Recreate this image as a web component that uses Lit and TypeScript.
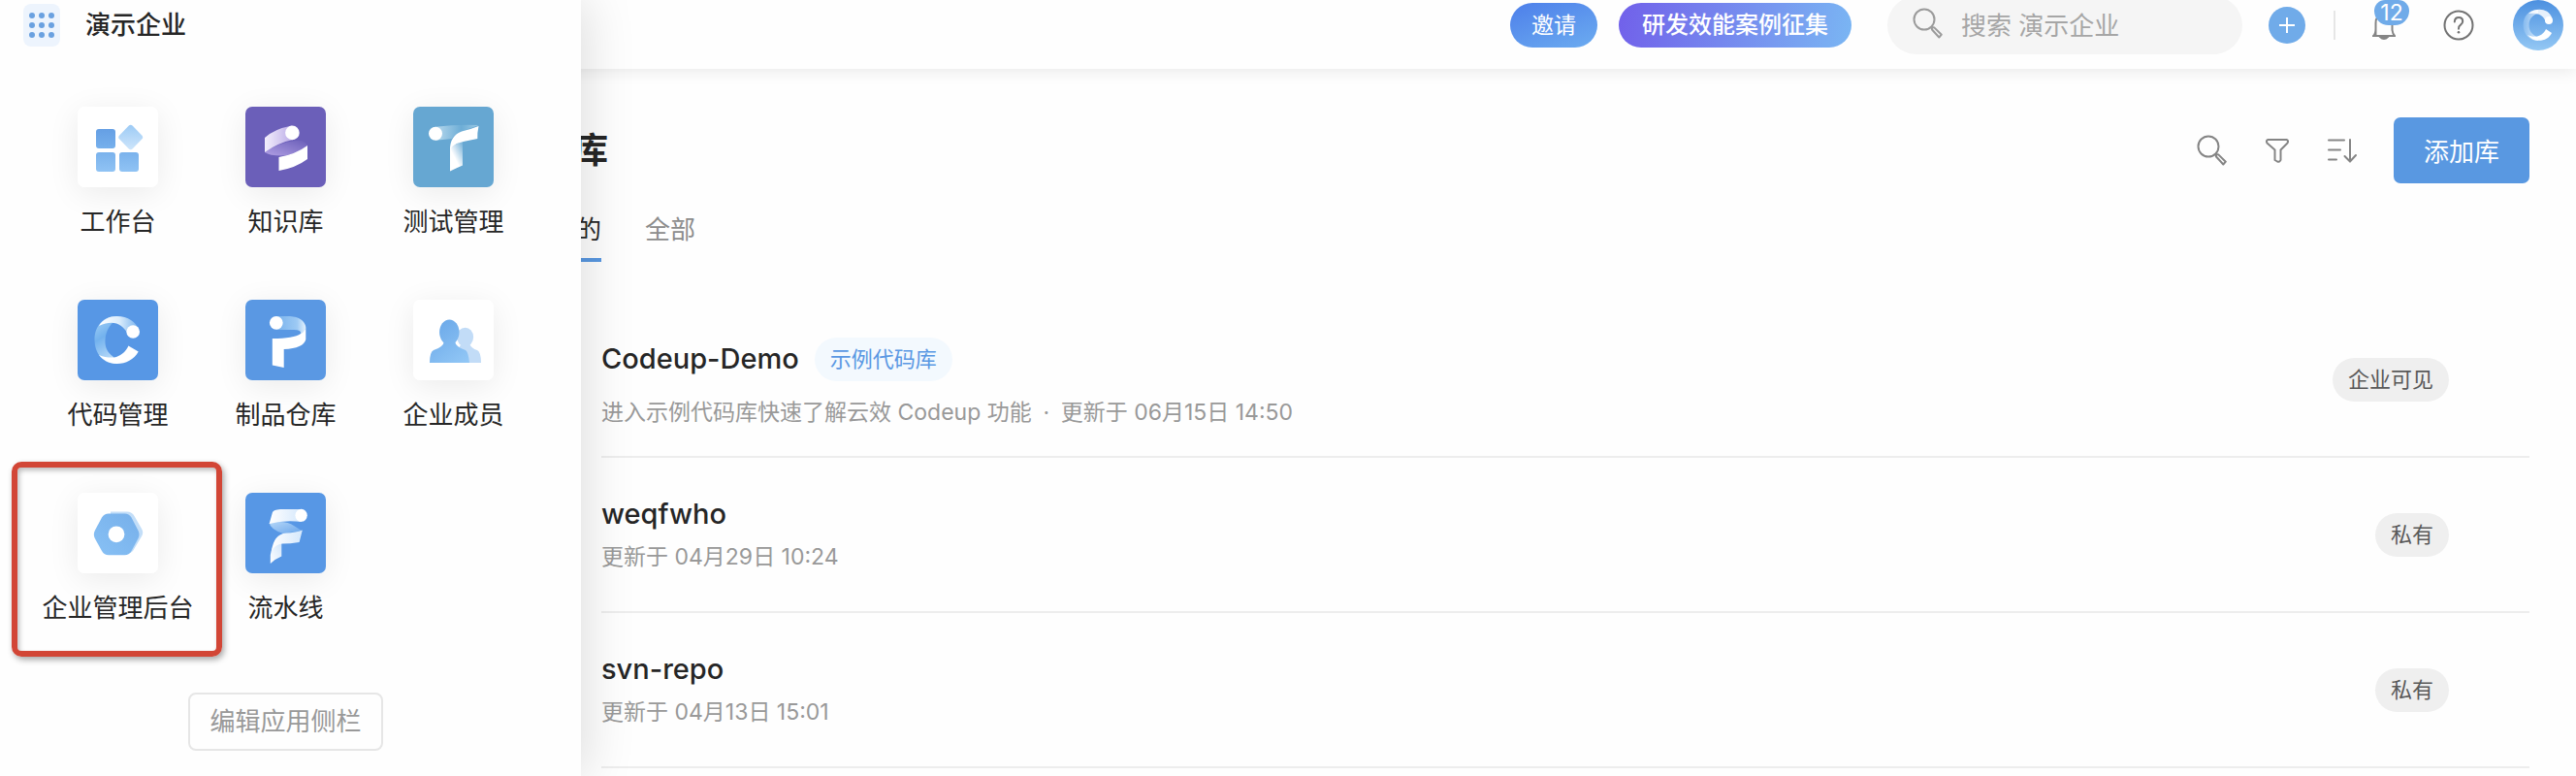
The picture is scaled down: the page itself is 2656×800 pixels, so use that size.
import { LitElement, html, css, svg } from "lit";
import { customElement, property } from "lit/decorators.js";

const reset = css`
  *,
  *::before,
  *::after {
    box-sizing: border-box;
  }
  button,
  input {
    font: inherit;
    color: inherit;
    border: 0;
    margin: 0;
    padding: 0;
    background: none;
  }
  a {
    color: inherit;
    text-decoration: none;
  }
  svg {
    display: block;
  }
`;

interface AppEntry {
  name: string;
  kind: string;
  color: string;
  art: unknown;
  active?: boolean;
}

const APPS: AppEntry[] = [
  {
    name: "工作台",
    kind: "workbench",
    color: "#fff",
    art: svg`
      <defs>
        <linearGradient id="wa" x1="0" y1="0" x2="0" y2="1"><stop offset="0" stop-color="#659fe4"/><stop offset="1" stop-color="#76b0ec"/></linearGradient>
        <linearGradient id="wb" x1="0" y1="0" x2="0" y2="1"><stop offset="0" stop-color="#7ab2ec"/><stop offset="1" stop-color="#90c3f4"/></linearGradient>
        <linearGradient id="wc" x1="0" y1="0" x2="0" y2="1"><stop offset="0" stop-color="#9dcbf5"/><stop offset="1" stop-color="#cde5fb"/></linearGradient>
      </defs>
      <rect x="19" y="23" width="20" height="20" rx="3" fill="url(#wa)"/>
      <rect x="19" y="47" width="20" height="20" rx="3" fill="url(#wb)"/>
      <rect x="43" y="47" width="20" height="20" rx="3" fill="url(#wb)"/>
      <path d="M52.6 19.8Q54.7 17.8 56.8 19.8L66.2 29.4Q68.2 31.5 66.2 33.6L56.8 43.2Q54.7 45.2 52.6 43.2L43.2 33.6Q41.2 31.5 43.2 29.4Z" fill="url(#wc)"/>`,
  },
  {
    name: "知识库",
    kind: "knowledge",
    color: "#6b5fb9",
    art: svg`
      <defs>
        <linearGradient id="ka"><stop offset="0" stop-color="#f3effc"/><stop offset="1" stop-color="#b7a6e6"/></linearGradient>
        <linearGradient id="kb" x1="0" y1="1" x2="1" y2="0"><stop offset="0" stop-color="#b09fe4"/><stop offset="1" stop-color="#6b5fb9"/></linearGradient>
      </defs>
      <path d="M20 47Q34 37 52 35Q61 34 64 40Q52 50 37 50.5Q25 50.5 20 47Z" fill="url(#kb)"/>
      <path d="M20 32Q30 23 48 19.6L51 33.5Q34 37 20 47Z" fill="url(#ka)"/>
      <circle cx="48.4" cy="26.9" r="7.3" fill="#fff"/>
      <path d="M34.5 52Q52 49 64 40V54Q52 63 34.5 66Z" fill="#fff"/>`,
  },
  {
    name: "测试管理",
    kind: "testing",
    color: "#66a7d2",
    art: svg`
      <defs>
        <linearGradient id="ta"><stop offset="0" stop-color="#b7d9ed"/><stop offset=".6" stop-color="#6dadd6"/><stop offset="1" stop-color="#9ccae4"/></linearGradient>
        <linearGradient id="tb" x1="1" y1="0" x2="0.2" y2="1"><stop offset="0" stop-color="#6dacd6"/><stop offset=".65" stop-color="#fff"/></linearGradient>
      </defs>
      <path d="M23 20.8Q46 18 67.5 19Q60 22 50 25.5Q43 28 40 33L23 34.8Z" fill="url(#ta)"/>
      <path d="M38 42L51 35V60.5Q45 63 38 66.5Z" fill="url(#tb)"/>
      <path d="M67.5 20Q66 27 66.3 33Q50 36 45 38Q41 40 38 44Q38 30 50 25.5Q60 23 67.5 20Z" fill="#fff"/>
      <circle cx="23" cy="27.8" r="7" fill="#fff"/>`,
  },
  {
    name: "代码管理",
    kind: "code",
    color: "#5797e5",
    art: svg`
      <defs>
        <linearGradient id="ca" x1="0" y1="0" x2="0.3" y2="1"><stop offset="0" stop-color="#a9d4f7"/><stop offset=".5" stop-color="#73b2ee"/><stop offset="1" stop-color="#b4d8f8"/></linearGradient>
        <linearGradient id="cb"><stop offset="0" stop-color="#fff"/><stop offset=".5" stop-color="#dcedfc"/><stop offset="1" stop-color="#75b1ed"/></linearGradient>
      </defs>
      <path d="M40 17C27 17 17.5 27 17.5 41C17.5 56 27 66 40 66L37 59C30 54 28 48 28.5 41C29 33 33 26 38 22Z" fill="url(#ca)"/>
      <path d="M22 27C26 20 33 17 40.5 17C52 17 60 23 63.5 31L51 34C46 25 37 20 22 27Z" fill="url(#cb)"/>
      <path d="M62.7 53.6C58 62 50 66 40.5 66C33 66 26 62 22 57C29 60 36 60 40 59C46 57 50 53 52.4 47.6Z" fill="#fff"/>
      <circle cx="57.2" cy="33" r="6.8" fill="#fff"/>`,
  },
  {
    name: "制品仓库",
    kind: "packages",
    color: "#5a98e3",
    art: svg`
      <defs>
        <linearGradient id="pa"><stop offset="0" stop-color="#79b2ec"/><stop offset=".7" stop-color="#9dcaf4"/><stop offset="1" stop-color="#e4f1fd"/></linearGradient>
      </defs>
      <path d="M32 17H46Q60 18 62.3 28Q62 33 57 35Q58 31 50 31L32 31Z" fill="url(#pa)"/>
      <path d="M62.3 28V41Q60 50 39.7 51V70L27.8 67.6V40Q50 40 57 35Q62 32 62.3 28Z" fill="#fff"/>
      <circle cx="31.8" cy="23.8" r="6.9" fill="#fff"/>`,
  },
  {
    name: "企业成员",
    kind: "members",
    color: "#fff",
    art: svg`
      <defs>
        <linearGradient id="ma" gradientUnits="userSpaceOnUse" x1="22" y1="20" x2="56" y2="66"><stop offset="0" stop-color="#69a7e8"/><stop offset="1" stop-color="#93c8f6"/></linearGradient>
      </defs>
      <g fill="#c2dcf7">
        <ellipse cx="53.6" cy="38.5" rx="8.5" ry="9.8"/>
        <path d="M40 65V54Q48 51 49 46H58.5Q60 50 66 52Q70 54 70 65Z"/>
      </g>
      <g fill="url(#ma)">
        <ellipse cx="37.3" cy="33.5" rx="10.2" ry="13"/>
        <path d="M17 65Q17 54 21 52Q31 49 32 43H43Q44 49 54 52Q57 54 58 65Z"/>
      </g>`,
  },
  {
    name: "企业管理后台",
    kind: "admin",
    color: "#fff",
    active: true,
    art: svg`
      <defs>
        <linearGradient id="ha" x1="1" y1="0" x2="0" y2="1"><stop offset="0" stop-color="#76afea"/><stop offset="1" stop-color="#88c1f5"/></linearGradient>
      </defs>
      <path d="M34 19.5H51Q56 19.5 58.5 24L66 37Q68.5 41 66 45L57 60Q55 62.5 51 62.5H34Z" fill="#c3def8"/>
      <path d="M32 21.4H48.5Q53 21.4 55.5 25.5L62.5 39Q64.5 43 62.5 47L55.5 60Q53 64.3 48.5 64.3H32Q27.5 64.3 25 60L17.8 47Q15.8 43 17.8 39L25 25.5Q27.5 21.4 32 21.4Z" fill="url(#ha)"/>
      <circle cx="40" cy="42.8" r="8.4" fill="#fff"/>`,
  },
  {
    name: "流水线",
    kind: "flow",
    color: "#5797e5",
    art: svg`
      <defs>
        <linearGradient id="fb" x1="0" y1="0" x2="1" y2="1"><stop offset="0" stop-color="#b4d6f8"/><stop offset="1" stop-color="#6aa6ea"/></linearGradient>
        <linearGradient id="fc" x1="0" y1="1" x2="1" y2="0"><stop offset="0" stop-color="#fff"/><stop offset="1" stop-color="#d0e5fb"/></linearGradient>
        <linearGradient id="fd"><stop offset="0" stop-color="#fff"/><stop offset="1" stop-color="#d5e8fc"/></linearGradient>
      </defs>
      <path d="M24.6 31Q42 28 50 34L58.8 39.5Q48 40 39 42Q26 38 24.6 31Z" fill="url(#fb)"/>
      <path d="M28 20Q29 17.5 36 17H58V30Q40 28 24.6 32Z" fill="url(#fd)"/>
      <path d="M25.8 64Q27 56 31 52L37.3 51V65.5Q31 68 25.8 73Z" fill="url(#fc)"/>
      <path d="M27 60Q29 43 42 41.5Q52 41 58.8 38.5L55.6 51Q46 52.5 38 52.5Q31 53 27 60Z" fill="url(#fd)"/>
      <ellipse cx="57.6" cy="23.3" rx="6.2" ry="6.5" fill="#fff"/>`,
  },
];

interface Repo {
  name: string;
  tag?: string;
  note?: string;
  updated: string;
  visibility: string;
}

const REPOS: Repo[] = [
  {
    name: "Codeup-Demo",
    tag: "示例代码库",
    note: "进入示例代码库快速了解云效 Codeup 功能",
    updated: "更新于 06月15日 14:50",
    visibility: "企业可见",
  },
  { name: "weqfwho", updated: "更新于 04月29日 10:24", visibility: "私有" },
  { name: "svn-repo", updated: "更新于 04月13日 15:01", visibility: "私有" },
];

const magnifier = html`
  <svg width="32" height="32" viewBox="0 0 32 32" fill="none" stroke="currentColor" stroke-width="2" aria-hidden="true">
    <circle cx="12" cy="12" r="10.5" />
    <path d="M19.5 19.5l1.5 1.5M20 22.5q-.5-1 .3-1.8t2-.3l7.5 7.3-2.5 2.8z" stroke-linejoin="round" />
  </svg>
`;

@customElement("app-drawer")
class AppDrawer extends LitElement {
  static styles = [
    reset,
    css`
      :host {
        display: flex;
        flex-direction: column;
        background: #fefefe;
        box-shadow: 6px 0 48px rgba(0, 0, 0, 0.13);
        color: #262626;
        font-size: 26px;
        line-height: 36px;
      }
      .head {
        display: flex;
        align-items: center;
        gap: 26px;
        height: 52px;
        padding-left: 24px;
      }
      .launcher {
        display: grid;
        place-items: center;
        width: 38px;
        height: 44px;
        border-radius: 8px;
        background: #edf4fd;
        color: #6aa1e0;
        cursor: pointer;
      }
      .org {
        font-weight: 500;
      }
      .apps {
        display: grid;
        grid-template-columns: repeat(3, 173px);
        row-gap: 62px;
        margin: 0;
        padding: 58px 0 0 35px;
        list-style: none;
      }
      .cell {
        position: relative;
      }
      .app {
        display: flex;
        flex-direction: column;
        align-items: center;
        gap: 18px;
        white-space: nowrap;
      }
      .tile {
        width: 83px;
        height: 83px;
        border-radius: 7px;
        box-shadow: 0 6px 32px rgba(0, 0, 0, 0.08);
        overflow: hidden;
      }
      .active::after {
        content: "";
        position: absolute;
        inset: -32px -21px -32px -23px;
        border: 6px solid #d24636;
        border-radius: 10px;
        box-shadow: 2px 3px 6px rgba(0, 0, 0, 0.35), inset 2px 3px 5px rgba(0, 0, 0, 0.25);
        pointer-events: none;
      }
      .edit {
        align-self: center;
        height: 60px;
        margin: 69px 10px 26px 0;
        padding: 0 20px;
        border: 2px solid #e6e6e6;
        border-radius: 8px;
        color: #999;
        cursor: pointer;
      }
    `,
  ];

  render() {
    return html`
      <div class="head">
        <button class="launcher" aria-label="演示企业">
          <svg width="28" height="28" viewBox="0 0 28 28" fill="currentColor">
            ${[4, 14, 24].map((y) => [4, 14, 24].map((x) => svg`<circle cx=${x} cy=${y} r="3" />`))}
          </svg>
        </button>
        <span class="org">演示企业</span>
      </div>
      <ul class="apps">
        ${APPS.map(
          (app) => html`
            <li class="cell ${app.active ? "active" : ""}">
              <a class="app" href="#${app.kind}">
                <svg class="tile" viewBox="0 0 83 83" aria-hidden="true">
                  <rect width="83" height="83" fill=${app.color} />
                  ${app.art}
                </svg>
                <span>${app.name}</span>
              </a>
            </li>
          `
        )}
      </ul>
      <button class="edit">编辑应用侧栏</button>
    `;
  }
}

@customElement("top-bar")
class TopBar extends LitElement {
  static styles = [
    reset,
    css`
      :host {
        display: flex;
        justify-content: flex-end;
        align-items: center;
        height: 71px;
        padding: 0 13px 19px 0;
        background: #fefefe;
        box-shadow: 0 2px 16px rgba(0, 0, 0, 0.09);
      }
      .pill {
        height: 46px;
        margin-right: 22px;
        padding: 0 22px;
        border-radius: 23px;
        background: linear-gradient(160deg, #4d7fea, #6cacf0);
        color: #fff;
        font-size: 23px;
        line-height: 46px;
      }
      .promo {
        padding: 0 24px;
        background: linear-gradient(100deg, #7160ea, #7ab6f3);
        font-size: 24px;
        font-weight: 500;
      }
      .search {
        display: flex;
        align-items: center;
        gap: 18px;
        width: 366px;
        height: 60px;
        margin: 0 27px 0 15px;
        padding: 0 26px;
        border-radius: 30px;
        background: #f5f5f5;
        color: #9b9b9b;
      }
      .search svg {
        flex: none;
        margin-top: -4px;
      }
      .query {
        flex: 1;
        min-width: 0;
        height: 40px;
        font-size: 26px;
        outline: none;
      }
      .query::placeholder {
        color: #a6a6a6;
        opacity: 1;
      }
      .add {
        display: grid;
        place-items: center;
        width: 38px;
        height: 38px;
        border-radius: 50%;
        background: #70abe9;
        color: #fff;
      }
      .rule {
        width: 2px;
        height: 30px;
        margin: 0 38px 0 29px;
        background: #e6e6e6;
      }
      .bell {
        position: relative;
        color: #858585;
      }
      .count {
        position: absolute;
        left: 2px;
        bottom: 15px;
        width: 36px;
        height: 26px;
        border-radius: 12px 12px 16px 16px;
        background: #70abe9;
        color: #fff;
        font-size: 23px;
        line-height: 26px;
        text-align: center;
      }
      .help {
        margin: 0 40px 0 49px;
        color: #737373;
      }
    `,
  ];

  render() {
    return html`
      <button class="pill">邀请</button>
      <button class="pill promo">研发效能案例征集</button>
      <label class="search">
        ${magnifier}
        <input class="query" type="search" placeholder="搜索 演示企业" aria-label="搜索 演示企业" />
      </label>
      <button class="add" aria-label="添加库">
        <svg width="16" height="16" viewBox="0 0 16 16" stroke="currentColor" stroke-width="2"><path d="M8 0v16M0 8h16" /></svg>
      </button>
      <span class="rule"></span>
      <button class="bell" aria-label="12">
        <svg width="24" height="30" viewBox="0 0 24 30" fill="none" stroke="currentColor" stroke-width="2">
          <path d="M3.5 26V13Q3.5 4 12 4T20.5 13V20Q21 24 23 26H1Q3.5 24 3.5 19" />
          <path d="M8 27q4 4 8 0z" fill="currentColor" />
        </svg>
        <span class="count">12</span>
      </button>
      <button class="help" aria-label="?">
        <svg width="32" height="32" viewBox="0 0 32 32" fill="none" stroke="currentColor" stroke-width="2">
          <circle cx="16" cy="16" r="14.5" />
          <path d="M11.8 12.5q.2-4.5 4.3-4.5t4.1 4q0 2.2-2.2 3.7t-2 4" stroke-linecap="round" />
          <circle cx="16" cy="23.3" r="1.3" fill="currentColor" stroke="none" />
        </svg>
      </button>
      <a href="#me" aria-label="C">
        <svg width="52" height="52" viewBox="0 0 52 52">
          <defs>
            <linearGradient id="ba" x1="0" y1="0" x2="0" y2="1"><stop offset="0" stop-color="#4c90e0" /><stop offset="1" stop-color="#94c8f4" /></linearGradient>
            <linearGradient id="bb"><stop offset="0" stop-color="#8fc1f2" /><stop offset="1" stop-color="#fff" /></linearGradient>
          </defs>
          <circle cx="26" cy="26" r="26" fill="url(#ba)" />
          <path d="M26 10C16 10 10.5 17 10.5 26C10.5 35 17 42 26 42L26 38.5C19 36 16.5 31 16.5 26C16.5 20 20 15 26 14Z" fill="url(#bb)" opacity=".7" />
          <path d="M16 14C24 7 37 9 40 18L34 23C31 14 24 13 16 14Z" fill="#fff" opacity=".85" />
          <circle cx="37" cy="21" r="4" fill="#fff" />
          <path d="M40 34C36 43 22 45 15 36C23 40 31 37 34 30Z" fill="#fff" />
        </svg>
      </a>
    `;
  }
}

@customElement("repo-row")
class RepoRow extends LitElement {
  @property({ attribute: false }) repo!: Repo;

  static styles = [
    reset,
    css`
      :host {
        display: flex;
        align-items: center;
        justify-content: space-between;
        height: 160px;
        padding: 0 83px 0 0;
        border-bottom: 2px solid #ededed;
        color: #999;
        font-size: 22px;
      }
      .title {
        display: flex;
        align-items: center;
        gap: 16px;
        margin-bottom: 10px;
        line-height: 36px;
      }
      .tagged {
        margin: 6px 0 16px;
      }
      .name {
        color: #262626;
        font-size: 29px;
        font-weight: 500;
      }
      .tag,
      .visibility {
        height: 45px;
        padding: 0 16px;
        border-radius: 23px;
        line-height: 44px;
      }
      .tag {
        background: #f3f9fe;
        color: #5a98e3;
      }
      .visibility {
        background: #efefef;
        color: #595959;
      }
      .meta {
        display: flex;
        font-size: 23px;
        line-height: 32px;
      }
      .dot {
        width: 30px;
        text-align: center;
      }
    `,
  ];

  render() {
    const { name, tag, note, updated, visibility } = this.repo;
    return html`
      <div>
        <div class="title ${tag ? "tagged" : ""}">
          <a class="name" href="#${name}">${name}</a>
          ${tag ? html`<span class="tag">${tag}</span>` : null}
        </div>
        <div class="meta">
          ${note ? html`<span>${note}</span><span class="dot">·</span>` : null}
          <span>${updated}</span>
        </div>
      </div>
      <span class="visibility">${visibility}</span>
    `;
  }
}

@customElement("app-root")
class AppRoot extends LitElement {
  static styles = [
    reset,
    css`
      :host {
        display: block;
        position: relative;
        min-height: 100vh;
        overflow: hidden;
        background: #fefefe;
        color: #262626;
        font-family: Inter, "Noto Sans CJK SC", sans-serif;
      }
      .drawer {
        position: absolute;
        inset: 0 auto 0 0;
        width: 599px;
      }
      .page {
        padding: 50px 48px 0 591px;
      }
      .toolbar {
        display: flex;
        align-items: center;
        height: 68px;
      }
      .heading {
        flex: 1;
        margin: 0;
        font-size: 36px;
        font-weight: 700;
        line-height: 48px;
      }
      .tools {
        display: flex;
        align-items: center;
        gap: 38px;
        margin-right: 37px;
        color: #858585;
      }
      .create {
        height: 68px;
        padding: 0 31px 2px;
        border-radius: 7px;
        background: #5998e1;
        color: #fff;
        font-size: 26px;
      }
      .tabs {
        display: flex;
        gap: 45px;
        margin: 29px 0 42px 3px;
      }
      .tab {
        padding-bottom: 10px;
        border-bottom: 4px solid transparent;
        color: #8c8c8c;
        font-size: 26px;
        line-height: 38px;
      }
      .current {
        border-color: #5998e1;
        color: #262626;
      }
      .list {
        margin-left: 29px;
      }
    `,
  ];

  render() {
    return html`
      <top-bar></top-bar>
      <main class="page">
        <div class="toolbar">
          <h1 class="heading">库</h1>
          <div class="tools">
            <button aria-label="搜索">${magnifier}</button>
            <button aria-label="filter">
              <svg width="26" height="28" viewBox="0 0 26 28" fill="none" stroke="currentColor" stroke-width="2" stroke-linejoin="round">
                <path d="M3.5 3H22.5Q25 4 23.5 6.5L16.5 13.5V24Q15.5 26.5 13 25.5L10.5 24V13.5L2.5 6.5Q1 4 3.5 3Z" />
              </svg>
            </button>
            <button aria-label="sort">
              <svg width="32" height="28" viewBox="0 0 32 28" fill="none" stroke="currentColor" stroke-width="2" stroke-linecap="round">
                <path d="M2 3.5H18M2 13.5H14M2 23.5H10M24 3V25.5M18.5 20L24 25.5L30 19" />
              </svg>
            </button>
          </div>
          <button class="create">添加库</button>
        </div>
        <nav class="tabs">
          <a class="tab current" href="#mine">的</a>
          <a class="tab" href="#all">全部</a>
        </nav>
        <section class="list">
          ${REPOS.map((repo) => html`<repo-row .repo=${repo}></repo-row>`)}
        </section>
      </main>
      <app-drawer class="drawer"></app-drawer>
    `;
  }
}
